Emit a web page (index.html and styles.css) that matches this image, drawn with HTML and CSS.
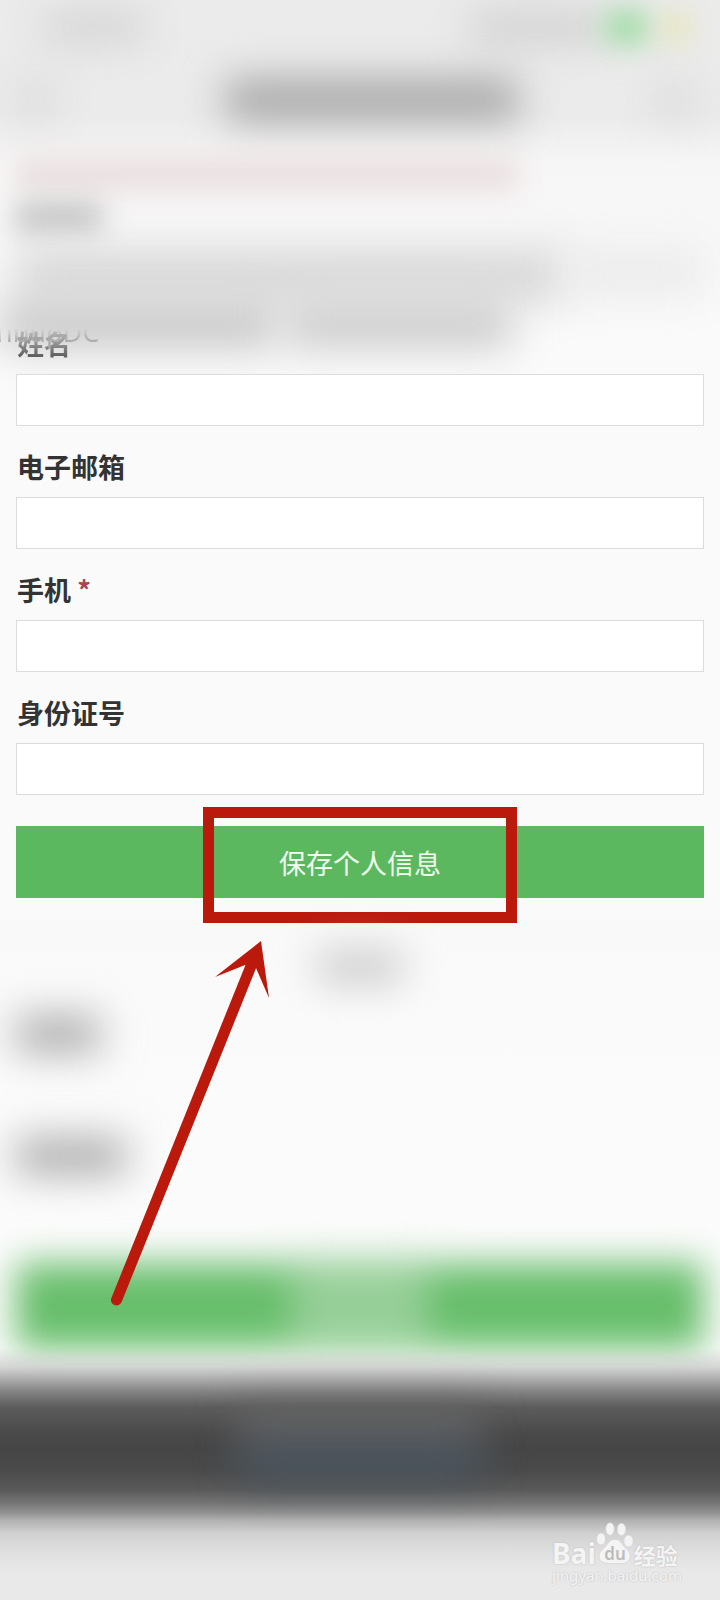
FILE: index.html
```html
<!DOCTYPE html>
<html lang="zh-CN">
<head>
<meta charset="utf-8">
<meta name="viewport" content="width=device-width, initial-scale=1">
<title>保存个人信息</title>
<link rel="stylesheet" href="styles.css">
</head>
<body>
<main class="page">
  <header class="top" aria-hidden="true">
    <div class="status">
      <i class="haze time"></i><i class="haze signal"></i><i class="haze battery"></i><i class="haze charge"></i>
    </div>
    <div class="navbar">
      <i class="haze nav-icon"></i><i class="haze nav-title"></i><i class="haze nav-icon"></i>
    </div>
    <div class="notice"><i class="haze notice-line"></i></div>
    <i class="haze caption"></i>
    <div class="select-line"><i class="haze select-text"></i><i class="haze select-end"></i></div>
    <div class="hint"><i class="haze hint-start"></i><i class="haze hint-end"></i></div>
  </header>

  <form class="form">
    <div class="field">
      <span class="ghost" aria-hidden="true">nbupDC</span>
      <label class="label label-faded" for="name">姓名</label>
      <input class="input" id="name" type="text">
    </div>
    <div class="field">
      <label class="label" for="email">电子邮箱</label>
      <input class="input" id="email" type="email">
    </div>
    <div class="field">
      <label class="label" for="phone">手机 <span class="required">*</span></label>
      <input class="input" id="phone" type="tel">
    </div>
    <div class="field">
      <label class="label" for="idno">身份证号</label>
      <input class="input" id="idno" type="text">
    </div>
    <div class="submit">
      <button class="save" type="button">保存个人信息</button>
      <div class="frame"></div>
      <svg class="arrow" viewBox="0 0 160 366" aria-hidden="true">
        <path d="M6.500 359 141 25" fill="none" stroke="#bb190c" stroke-width="11" stroke-linecap="round"/>
        <path d="M151 0 105 36 135 24 146 27 159 57Z" fill="#bb190c"/>
      </svg>
    </div>
  </form>

  <section class="lower" aria-hidden="true">
    <i class="haze link-haze"></i>
    <i class="haze label-haze"></i>
    <i class="haze label-haze label-long"></i>
    <div class="haze bar"><i class="haze bar-text"></i></div>
  </section>

  <footer class="footer">
    <div class="dark" aria-hidden="true"><i class="haze foot-text"></i><i class="haze foot-link"></i></div>
    <div class="watermark">
      <div class="brand">
        <span>Bai</span>
        <svg class="paw" viewBox="0 0 38 42" aria-hidden="true">
          <g fill="#f4f4f4" stroke="#cfcfcf" stroke-width="0.6">
            <ellipse cx="5" cy="17" rx="4.500" ry="6"/>
            <ellipse cx="14" cy="7" rx="4.300" ry="6.300"/>
            <ellipse cx="25.500" cy="7.500" rx="4.300" ry="6.200"/>
            <ellipse cx="32.500" cy="19" rx="4.700" ry="6"/>
            <path d="M19 17.500c5 0 6 3 9 7 3 3 7 6 6 11-1 6-7 6-11 6h-9C9 41 4 41 3 35c0-5 4-8 7-11 3-4 4-6.500 9-6.500Z"/>
          </g>
          <text class="paw-text" x="19" y="38" text-anchor="middle">du</text>
        </svg>
        <span class="brand-cn">经验</span>
      </div>
      <div class="site">jingyan.baidu.com</div>
    </div>
  </footer>
</main>
</body>
</html>
```
FILE: styles.css
```css
* { box-sizing: border-box; }

body {
  margin: 0;
  background: #fafafa;
  color: #333;
  font-family: "Noto Sans CJK SC", "Noto Sans", sans-serif;
}

.page { overflow: hidden; }

.haze { display: block; filter: blur(20px); }

/* Hazy area above the form; its last line runs down behind the first label */
.top {
  display: flex;
  flex-direction: column;
  height: 324px;
  background: linear-gradient(#ebebeb 0, #ebebeb 116px, #f7f6f6 164px, #fafafa 100%);
}
.top > * { flex-shrink: 0; }

.status {
  display: flex;
  align-items: center;
  height: 54px;
  padding: 0 32px 0 44px;
}
.time { width: 100px; height: 28px; background: #d0d0d0; }
.signal { width: 136px; height: 28px; margin-left: auto; background: #cccccc; }
.battery { width: 42px; height: 34px; background: #a0dca5; filter: blur(14px); }
.charge { width: 24px; height: 28px; margin-left: 16px; background: #e4e4b0; filter: blur(14px); }

.navbar {
  display: flex;
  align-items: center;
  justify-content: space-between;
  height: 92px;
  padding: 0 30px 0 20px;
}
.nav-icon { width: 32px; height: 28px; background: #d2d2d2; }
.nav-title { width: 292px; height: 40px; margin-left: 34px; background: #a2a2a2; }

.notice { height: 56px; padding: 12px 28% 0 16px; }
.notice-line { height: 32px; background: #e9dede; filter: blur(14px); }

.caption { width: 86px; height: 32px; margin-left: 16px; background: #c4c4c4; filter: blur(14px); }

.select-line { display: flex; padding: 14px 16px 0; }
.select-text { flex: 4; height: 54px; background: #d9d9d9; }
.select-end { flex: 1; height: 48px; background: #ebebeb; }

.hint { display: flex; justify-content: space-between; width: 71%; }
.hint-start { width: 54%; height: 46px; background: #c8c8c8; }
.hint-end { width: 44%; height: 46px; background: #cccccc; }

/* Form */
.form { padding: 0 16px; }

.field { position: relative; margin-bottom: 21px; }

.label {
  display: block;
  margin-bottom: 10px;
  padding-left: 1px;
  font-size: 27px;
  font-weight: 700;
  line-height: 40px;
}

.label-faded {
  position: relative;
  width: max-content;
  background: linear-gradient(#c8c8c8 0, #a0a0a0 40%, #606060 80%);
  background-clip: text;
  color: transparent;
}

.ghost {
  position: absolute;
  left: -20px;
  top: -10px;
  z-index: 1;
  background: linear-gradient(transparent 40%, #aaaaaa 75%);
  background-clip: text;
  color: transparent;
  font-family: "Noto Sans", sans-serif;
  font-size: 27px;
  line-height: 36px;
}

.required { color: #a94450; }

.input {
  position: relative;
  display: block;
  width: 100%;
  height: 52px;
  padding: 0 12px;
  border: 1px solid #dcdcdc;
  border-radius: 0;
  background: #fff;
  font: inherit;
  font-size: 27px;
}

.submit { position: relative; margin-top: 31px; }

.save {
  display: block;
  width: 100%;
  height: 72px;
  padding: 0;
  border: 0;
  background: #5cb85f;
  color: #f0fff0;
  font: inherit;
  font-size: 27px;
}

.frame {
  position: absolute;
  top: -19px;
  bottom: -25px;
  left: 50%;
  width: 314px;
  margin-left: -157px;
  border: 11px solid #bb190c;
  pointer-events: none;
}

.arrow {
  position: absolute;
  z-index: 2;
  top: 115px;
  left: 94px;
  width: 160px;
  height: 366px;
  pointer-events: none;
}

/* Hazy area below the form */
.lower {
  display: flex;
  flex-direction: column;
  padding: 54px 16px 0;
  background: linear-gradient(#fafafa, #f8f9f8 30px, #fafafa 90px, #fcfcfc);
}
.link-haze { align-self: center; width: 84px; height: 30px; background: #c4c4c4; }
.label-haze { width: 84px; height: 34px; margin-top: 35px; background: #a4a4a4; }
.label-long { width: 110px; margin-top: 88px; }
.bar {
  display: flex;
  justify-content: center;
  height: 86px;
  margin-top: 90px;
  background: #67be6b;
  filter: blur(18px);
}
.bar-text { width: 138px; background: #97cf99; filter: blur(8px); }

/* Footer; its dark band fades in over the bottom edge of the bar */
.footer {
  position: relative;
  display: flex;
  flex-direction: column;
  height: 251px;
  background: linear-gradient(#cccccc00 0, #cccccccc 18px, #aaaaaa 31px, #828282 43px, #5c5c5c 58px, #4a4a4a 84px, #464646 100px, #4a4a4a 121px, #5a5a5a 141px, #757575 154px, #929292 164px, #b0b0b0 171px, #d0d0d0 184px, #dedede 201px, #e9e9e9 224px);
}
.dark { display: flex; flex-direction: column; align-items: center; padding-top: 62px; }
.foot-text { width: 240px; height: 34px; background: #6a6a6a; }
.foot-link { width: 240px; height: 32px; background: #4a5764; }

.watermark {
  align-self: flex-end;
  width: 128px;
  margin: 45px 40px 0 0;
  color: #f4f4f4;
  font-family: "Noto Sans", "Noto Sans CJK SC", sans-serif;
  text-shadow: 0 0 2px #b8b8b8;
}
.brand { display: flex; align-items: baseline; height: 44px; font-size: 28px; font-weight: 700; line-height: 30px; }
.paw { width: 38px; height: 42px; }
.paw-text { fill: #bcbcbc; font: 600 17px "Noto Sans", sans-serif; text-shadow: none; }
.brand-cn { font-family: "Noto Sans CJK SC", sans-serif; font-size: 22px; line-height: 22px; }
.site { font-size: 15px; line-height: 18px; }
```
